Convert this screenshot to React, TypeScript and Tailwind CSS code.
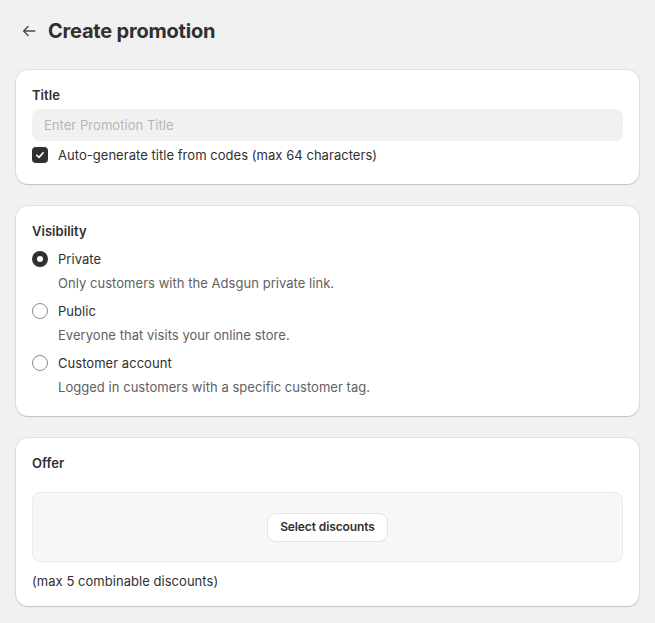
import React, { useState } from 'react';

type Visibility = 'private' | 'public' | 'customer';

const options: { id: Visibility; label: string; help: string }[] = [
  { id: 'private', label: 'Private', help: 'Only customers with the Adsgun private link.' },
  { id: 'public', label: 'Public', help: 'Everyone that visits your online store.' },
  { id: 'customer', label: 'Customer account', help: 'Logged in customers with a specific customer tag.' },
];

const Card: React.FC<{ children: React.ReactNode; className?: string }> = ({ children, className = '' }) => (
  <div
    className={`bg-white rounded-xl shadow-[0_1px_0_0_rgba(26,26,26,0.07),0_0_0_1px_rgba(0,0,0,0.07),0_1px_2px_rgba(0,0,0,0.08)] px-4 pt-[15px] ${className}`}
  >
    {children}
  </div>
);

export default function App() {
  const [visibility, setVisibility] = useState<Visibility>('private');
  const [autoTitle, setAutoTitle] = useState(true);

  return (
    <div
      className="min-h-screen bg-[#f1f1f1] text-[#303030] px-4 pt-[17px] pb-4 text-[13px] tracking-[0.04px]"
      style={{ fontFamily: 'Inter, "Noto Sans", sans-serif' }}
    >
      {/* header */}
      <div className="flex items-center gap-[10px] h-7 mb-[25px]">
        <button className="w-[22px] h-7 flex items-center justify-end text-[#4a4a4a]">
          <svg width="18" height="18" viewBox="0 0 20 20" fill="none">
            <path d="M16.5 10H4M9 5l-5 5 5 5" stroke="currentColor" strokeWidth="1.5" strokeLinecap="round" strokeLinejoin="round" />
          </svg>
        </button>
        <h1 className="text-[20px] font-bold tracking-[-0.2px] leading-7">Create promotion</h1>
      </div>

      <div className="flex flex-col gap-[22px]">
        {/* title */}
        <Card className="pb-[19px]">
          <div className="font-semibold leading-5 mb-1">Title</div>
          <input
            placeholder="Enter Promotion Title"
            className="w-full h-8 rounded-lg bg-[#f1f1f1] px-3 outline-none placeholder:text-[#b5b5b5] text-[13px]"
          />
          <label className="flex items-center gap-2 mt-1 h-5 cursor-pointer">
            <span
              onClick={() => setAutoTitle(!autoTitle)}
              className={`w-4 h-4 rounded-[4px] flex items-center justify-center ${autoTitle ? 'bg-[#303030]' : 'border border-[#8a8a8a] bg-white'}`}
            >
              {autoTitle && (
                <svg width="12" height="12" viewBox="0 0 12 12" fill="none">
                  <path d="M2.8 6.2l2.2 2.2 4.2-4.6" stroke="white" strokeWidth="1.6" strokeLinecap="round" strokeLinejoin="round" />
                </svg>
              )}
            </span>
            <span className="leading-5 ml-[2px]">Auto-generate title from codes (max 64 characters)</span>
          </label>
        </Card>

        {/* visibility */}
        <Card className="pb-[19px]">
          <div className="font-semibold leading-5 mb-2">Visibility</div>
          <div className="flex flex-col gap-2">
            {options.map((o) => (
              <div key={o.id}>
                <label className="flex items-center gap-2 h-5 cursor-pointer" onClick={() => setVisibility(o.id)}>
                  <span
                    className={`w-4 h-4 rounded-full bg-white ${
                      visibility === o.id ? 'border-[5px] border-[#303030]' : 'border border-[#8a8a8a]'
                    }`}
                  />
                  <span className="leading-5 ml-[2px]">{o.label}</span>
                </label>
                <div className="pl-[26px] mt-1 leading-5 text-[#616161]">{o.help}</div>
              </div>
            ))}
          </div>
        </Card>

        {/* offer */}
        <Card className="pb-[15px]">
          <div className="font-semibold leading-5">Offer</div>
          <div className="mt-[19px] h-[70px] rounded-lg bg-[#f7f7f7] border border-[#ebebeb] flex items-center justify-center">
            <button className="h-[27px] px-3 rounded-lg bg-white text-[12px] font-semibold tracking-[-0.1px] shadow-[0_0_0_1px_#e3e3e3,0_1px_0_0_#d4d4d4] text-[#303030]">
              Select discounts
            </button>
          </div>
          <div className="mt-[9px] leading-5">(max 5 combinable discounts)</div>
        </Card>
      </div>
    </div>
  );
}
